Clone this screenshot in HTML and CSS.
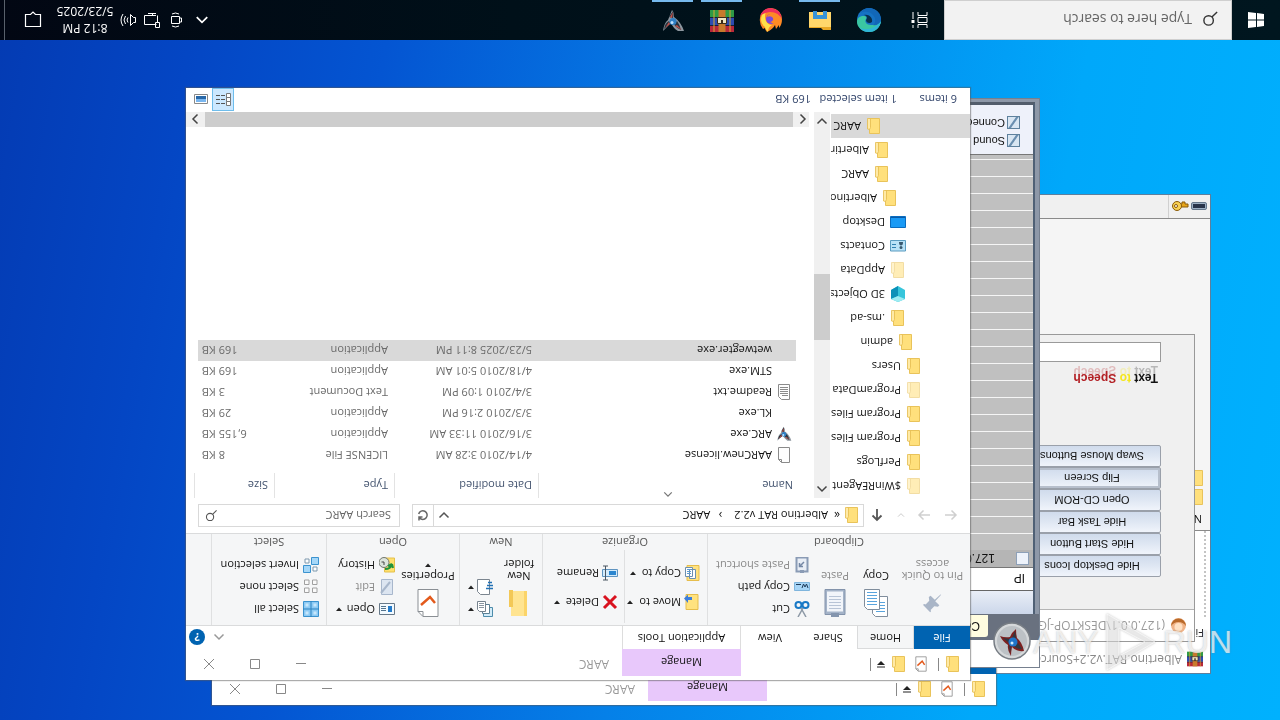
FILE: index.html
```html
<!DOCTYPE html>
<html lang="en">
<head>
    <meta charset="UTF-8">
    <meta name="viewport" content="width=device-width, initial-scale=1.0">
    <title>Desktop</title>
    <link rel="stylesheet" href="styles.css">
</head>
<body>
    <svg class="defs" aria-hidden="true">
        <symbol id="folder" viewBox="0 0 16 16"><path d="M2.5.5h10v15h-10z" fill="#ffe07c" stroke="#e9c35a"/><path d="M12.500 4.500l2 .5v10.500h-3v-9z" fill="#ffeaa6" stroke="#e4bb4c" stroke-width=".8"/></symbol>
        <symbol id="page" viewBox="0 0 16 16"><path d="M2.500.5h8l3 3v12h-11z" fill="#fdfdfd" stroke="#8a8a8a"/><path d="M10.500.5v3h3" fill="none" stroke="#8a8a8a"/></symbol>
        <symbol id="textpage" viewBox="0 0 16 16"><path d="M2.500.5h8l3 3v12h-11z" fill="#fdfdfd" stroke="#8a8a8a"/><path d="M4 4.500h6M4 6.500h8M4 8.500h8M4 10.500h8M4 12.500h8" stroke="#8a8a8a"/></symbol>
        <symbol id="checkpage" viewBox="0 0 16 20"><path d="M1.500 1h10l3 3v15h-13z" fill="#fff" stroke="#8b8b8b"/><path d="M11.500 1v3h3" fill="none" stroke="#8b8b8b"/><path d="M3.500 9l3 4.500 6-5.500" fill="none" stroke="#e3591c" stroke-width="1.800"/></symbol>
        <symbol id="arc" viewBox="0 0 24 24"><path d="M1 2h6q5 3 7 8l8-8q-1 8-5 11l-4 10q-2-2-2-7Q4 11 1 2z" fill="#8d979f"/><path d="M4 3q6 3 7 6l-3 3Q5 8 4 3zM21 4q-1 6-5 8l-2-3zM12 22q-1-4 0-7l4 1z" fill="#27313b"/><path d="M3 3l7 4-2 1zM20 5l-4 6-1-2zM12 21l1-6 2 1z" fill="#c6514a"/><circle cx="12" cy="11.500" r="3.500" fill="#2f7fc4"/><circle cx="13" cy="10.500" r="1.500" fill="#bfe3ff"/></symbol>
        <symbol id="rar" viewBox="0 0 24 22"><path d="M0 0h24v7H0z" fill="#b8283a"/><path d="M0 7h24v8H0z" fill="#2d4bb0"/><path d="M0 15h24v7H0z" fill="#2f9a45"/><path d="M0 6.500h24M0 14.500h24" stroke="#182038"/><path d="M4 0v22M20 0v22" stroke="#d9a830"/><path d="M8.500 0h7v22h-7z" fill="#c87a2c"/><path d="M7.500 8.500h9v6h-9z" fill="#eee4c0" stroke="#3b2b18"/><path d="M12 8v4" stroke="#3b2b18" stroke-width="2"/></symbol>
        <symbol id="arrow" viewBox="0 0 6 4"><path d="M0 0h6L3 3.500z" fill="#222"/></symbol>
        <symbol id="chev" viewBox="0 0 12 8"><path d="M1.500 1.500L6 6l4.500-4.500" fill="none" stroke="currentColor" stroke-width="1.500"/></symbol>
        <symbol id="search" viewBox="0 0 18 18"><circle cx="11" cy="7" r="5" fill="none" stroke="currentColor" stroke-width="1.500"/><path d="M7.500 10.500L2 16" stroke="currentColor" stroke-width="1.500"/></symbol>
    </svg>

    <div class="desktop">
        <main class="workspace">

            <!-- archive window -->
            <section class="window winrar">
                <header class="rar-title"><svg class="i16"><use href="#rar"/></svg><span>Albertino.RAT.v2.2+Source+Code</span></header>
                <nav class="rar-menu"><a href="#">File</a></nav>
                <div class="rar-tools"></div>
                <div class="rar-list">
                    <div class="rar-head">Name</div>
                    <svg class="i16"><use href="#folder"/></svg>
                    <svg class="i16"><use href="#folder"/></svg>
                </div>
                <footer class="rar-status">
                    <svg width="16" height="8" viewBox="0 0 16 8"><rect x=".5" y=".5" width="15" height="7" rx="1.500" fill="#9db0c4" stroke="#66788c"/><path d="M2 2h12v4H2z" fill="#28344a"/></svg>
                    <svg width="18" height="12" viewBox="0 0 18 12"><path d="M1 5h9v3H7v2H4V8H1z" fill="#e6a51b" stroke="#8a5a08"/><circle cx="12" cy="6" r="4.500" fill="#f8d052" stroke="#8a5a08"/><circle cx="13" cy="6" r="1.500" fill="#fff" stroke="#8a5a08"/></svg>
                    <i></i>
                </footer>
            </section>

            <!-- remote control window -->
            <section class="window remote">
                <header class="remote-title">
                    <svg width="17" height="17" viewBox="0 0 17 17"><circle cx="8.500" cy="8.500" r="7.500" fill="#f0b489"/><path d="M1 8a7.500 7.500 0 0 0 15 0q-3 4-7.500 4T1 8z" fill="#b96a2a"/><circle cx="8.500" cy="7" r="4" fill="#ffe1c4"/></svg>
                    <span>(127.0.0.1\DESKTOP-JGLLJLD)</span>
                </header>
                <div class="remote-body">
                    <div class="remote-buttons">
                        <button>Hide Desktop Icons</button>
                        <button>Hide Start Button</button>
                        <button>Hide Task Bar</button>
                        <button>Open CD-ROM</button>
                        <button class="focused">Flip Screen</button>
                        <button>Swap Mouse Buttons</button>
                    </div>
                    <label class="speech" for="speech">
                        <span class="speech-text">Text <em>to</em> <strong>Speech</strong></span>
                        <span class="speech-text mirror" aria-hidden="true">Text <em>to</em> <strong>Speech</strong></span>
                    </label>
                    <input id="speech" type="text">
                </div>
            </section>

            <!-- second explorer window, mostly hidden -->
            <section class="window explorer back">
                <header class="titlebar">
                    <div class="quick">
                        <svg class="i16"><use href="#folder"/></svg><i></i>
                        <svg class="i16"><use href="#checkpage"/></svg>
                        <svg class="i16"><use href="#folder"/></svg>
                        <svg class="drop" viewBox="0 0 8 8"><path d="M0 1h8" stroke="#222"/><path d="M0 3h8L4 7z" fill="#222"/></svg><i></i>
                    </div>
                    <span class="manage">Manage</span>
                    <span class="caption">AARC</span>
                    <div class="controls">
                        <button aria-label="Minimize"><svg viewBox="0 0 12 12"><path d="M1 6.500h10"/></svg></button>
                        <button aria-label="Maximize"><svg viewBox="0 0 12 12"><path d="M1.500 1.500h9v9h-9z"/></svg></button>
                        <button aria-label="Close"><svg viewBox="0 0 12 12"><path d="M1 1l10 10M11 1L1 11"/></svg></button>
                    </div>
                </header>
                <nav class="tabs"><button class="file" aria-label="File"></button></nav>
                <div class="ribbon"></div>
            </section>

            <!-- client list window -->
            <section class="window client">
                <header class="client-title"></header>
                <svg class="client-logo" viewBox="0 0 38 38"><circle cx="19" cy="19" r="18" fill="#d5d8da" stroke="#777d84" stroke-width="1.500"/><circle cx="19" cy="19" r="15" fill="#bcc1c5"/><path d="M7 9q8-1 12 4 1-5 1-9 4 6 3 11 5 3 8 9-5-2-10-1-2 5-6 8 0-6-1-9-5-4-7-13z" fill="#7b2020"/><path d="M9 11q6 0 8 3l-4 3zM21 7l1 8-2-2zM28 22l-6-5-1 4zM16 29l3-7-4-1z" fill="#303840"/><circle cx="18" cy="18" r="4.500" fill="#1f74c8"/><circle cx="19" cy="17" r="1.500" fill="#d0ecff"/></svg>
                <div class="client-tabs"><span>Connections</span></div>
                <div class="client-body">
                    <div class="client-bar"></div>
                    <div class="client-head">IP</div>
                    <div class="client-rows">
                        <label><input type="checkbox">127.0.0.1</label>
                    </div>
                    <div class="client-options">
                        <label><input type="checkbox" checked>Sound</label>
                        <label><input type="checkbox" checked>Connection</label>
                    </div>
                </div>
            </section>

            <!-- front explorer window -->
            <section class="window explorer front">
                <header class="titlebar">
                    <div class="quick">
                        <svg class="i16"><use href="#folder"/></svg><i></i>
                        <svg class="i16"><use href="#checkpage"/></svg>
                        <svg class="i16"><use href="#folder"/></svg>
                        <svg class="drop" viewBox="0 0 8 8"><path d="M0 1h8" stroke="#222"/><path d="M0 3h8L4 7z" fill="#222"/></svg><i></i>
                    </div>
                    <span class="manage">Manage</span>
                    <span class="caption">AARC</span>
                    <div class="controls">
                        <button aria-label="Minimize"><svg viewBox="0 0 12 12"><path d="M1 6.500h10"/></svg></button>
                        <button aria-label="Maximize"><svg viewBox="0 0 12 12"><path d="M1.500 1.500h9v9h-9z"/></svg></button>
                        <button aria-label="Close"><svg viewBox="0 0 12 12"><path d="M1 1l10 10M11 1L1 11"/></svg></button>
                    </div>
                </header>
                <nav class="tabs">
                    <button class="file">File</button>
                    <button class="active">Home</button>
                    <button>Share</button>
                    <button>View</button>
                    <button class="tools">Application Tools</button>
                    <div class="tabs-end">
                        <svg class="chev up"><use href="#chev"/></svg>
                        <button class="help" aria-label="Help">?</button>
                    </div>
                </nav>

                <div class="ribbon">
                    <div class="group clipboard">
                        <div class="tools-row">
                            <button class="big pin off"><svg viewBox="0 0 24 24"><path d="M14 2l8 8-2 1-1-.5-4 4 .5 4-2 1.500-4.500-4.500L3 21l-1 .5.5-1L8.500 14 4 9.500 5.500 8l4 .5 4-4L13 3z" fill="#a9b5c7"/></svg>Pin to Quick<br>access</button>
                            <button class="big copy"><svg viewBox="0 0 26 28"><path d="M1.500.5h12l3 3v17h-15z" fill="#fff" stroke="#7f8d9c"/><path d="M4 5.500h9M4 8.500h9M4 11.500h9M4 14.500h9" stroke="#59a4dd"/><path d="M9.500 7.500h12l3 3v17h-15z" fill="#fff" stroke="#7f8d9c"/><path d="M12 12.500h10M12 15.500h10M12 18.500h10M12 21.500h10M12 24.500h10" stroke="#59a4dd"/></svg>Copy</button>
                            <button class="big paste off"><svg viewBox="0 0 24 28"><path d="M2 2.500h20v25H2z" fill="#a4b3c8" stroke="#8393ab"/><path d="M4 5.500h16v20H4z" fill="#f2f5fa"/><path d="M8 0h8v4H8z" fill="#8495ae"/><path d="M6 8.500h12M6 11.500h12M6 14.500h12M6 17.500h12M6 20.500h12" stroke="#b8c4d6"/></svg>Paste</button>
                            <div class="stack">
                                <button class="small"><svg viewBox="0 0 16 16"><path d="M4 0l5 9M12 0L7 9" stroke="#8d99a6" stroke-width="1.500"/><circle cx="4.500" cy="12" r="3" fill="none" stroke="#1979c6" stroke-width="2"/><circle cx="11.500" cy="12" r="3" fill="none" stroke="#1979c6" stroke-width="2"/></svg>Cut</button>
                                <button class="small"><svg viewBox="0 0 16 16"><path d="M.5 4.500h15v8H.5z" fill="#a6d5f7" stroke="#7fb5dd"/><path d="M2 7l1.500 4L5 8l1.500 3L8 7M9 10.500h5" fill="none" stroke="#1d3a57"/></svg>Copy path</button>
                                <button class="small off"><svg viewBox="0 0 16 16"><path d="M2.500 1.500h11v14h-11z" fill="#e9eef6" stroke="#8a9bb5" stroke-width="2"/><path d="M6 0h4v3H6z" fill="#8a9bb5"/><path d="M6 11l4-4M7 6.500h3.500V10" fill="none" stroke="#7588a5" stroke-width="1.500"/></svg>Paste shortcut</button>
                            </div>
                        </div>
                        <div class="group-name">Clipboard</div>
                    </div>
                    <div class="group organize">
                        <div class="tools-row">
                            <div class="stack two">
                                <button class="small"><svg viewBox="0 0 16 16"><path d="M2 .5h12v15H2z" fill="#ffe27f" stroke="#e6bd4c"/><path d="M8 10h4V7l4 4.500-4 4V13H8z" fill="#3d7edb"/></svg>Move to<svg class="arrow"><use href="#arrow"/></svg></button>
                                <button class="small"><svg viewBox="0 0 16 16"><path d="M1 .5h12v15H1z" fill="#ffe27f" stroke="#e6bd4c"/><path d="M4.500 2.500h6v9h-6zM7.500 4.500h7v9h-7z" fill="#fff" stroke="#6d8fae"/><path d="M9 7.500h4M9 9.500h4M9 11.500h4" stroke="#5a9ad2"/></svg>Copy to<svg class="arrow"><use href="#arrow"/></svg></button>
                            </div>
                            <div class="stack two ruled">
                                <button class="small"><svg viewBox="0 0 16 16"><path d="M2 2l12 12M14 2L2 14" stroke="#d9121f" stroke-width="3"/></svg>Delete<svg class="arrow"><use href="#arrow"/></svg></button>
                                <button class="small"><svg viewBox="0 0 16 16"><path d="M.5 4.500h15v7H.5z" fill="#d4ebfb" stroke="#5f94c0"/><path d="M2 6h7v4H2z" fill="#2b86d0"/><path d="M12.500 1v14M10 1h5M10 15h5" stroke="#4a5663"/></svg>Rename</button>
                            </div>
                        </div>
                        <div class="group-name">Organize</div>
                    </div>
                    <div class="group new">
                        <div class="tools-row">
                            <button class="big newfolder"><svg viewBox="0 0 24 28"><path d="M4 1h16v25H4z" fill="#fbd469"/><path d="M7 1h13v25H7z" fill="#ffe491"/><path d="M18 10h4v17h-4z" fill="#f3c857"/></svg>New<br>folder</button>
                            <div class="stack icons">
                                <button class="small" aria-label="New item"><svg viewBox="0 0 16 16"><path d="M.5.5h9v9h-9z" fill="#d2ebf8" stroke="#4d8cab"/><path d="M3.500 3.500h7v9h-7z" fill="#fff" stroke="#5b7f93"/><path d="M7.500 5.500h6l2 2v8h-8z" fill="#fff" stroke="#76838e"/><path d="M9 9.500h5M9 11.500h5M9 13.500h5" stroke="#8a95a0"/></svg><svg class="arrow"><use href="#arrow"/></svg></button>
                                <button class="small" aria-label="Easy access"><svg viewBox="0 0 16 16"><path d="M3.500.5h9l3 3v12h-12z" fill="#fff" stroke="#7b858f"/><path d="M0 6.500h7M0 9.500h6M1 12.500h4" stroke="#2271b5" stroke-width="1.500"/></svg><svg class="arrow"><use href="#arrow"/></svg></button>
                            </div>
                        </div>
                        <div class="group-name">New</div>
                    </div>
                    <div class="group open">
                        <div class="tools-row">
                            <button class="big props"><svg viewBox="0 0 22 28"><path d="M1 .5h15l5 5v22H1z" fill="#fff" stroke="#8a8f94"/><path d="M16 .5v5h5" fill="none" stroke="#8a8f94"/><path d="M4 14l5 6 9-8" fill="none" stroke="#e35a1c" stroke-width="2.500"/></svg>Properties<svg class="arrow"><use href="#arrow"/></svg></button>
                            <div class="stack">
                                <button class="small"><svg viewBox="0 0 16 16"><path d="M.5 2.500h15v11H.5z" fill="#f3faff" stroke="#677989"/><path d="M3 5h4v6H3z" fill="#237bca"/><path d="M9 6.500h5M9 8.500h5M9 10.500h5" stroke="#53748e"/></svg>Open<svg class="arrow"><use href="#arrow"/></svg></button>
                                <button class="small off"><svg viewBox="0 0 16 16"><path d="M2.500.5h11v15h-11z" fill="#dce5f1" stroke="#a8b7cc"/><path d="M5 13L14 2" stroke="#a8b7cc" stroke-width="2"/></svg>Edit</button>
                                <button class="small"><svg viewBox="0 0 16 16"><path d="M.5 1h10v14H.5z" fill="#ffe06d" stroke="#e4c04b"/><circle cx="11" cy="10.500" r="5" fill="#dde4dc" stroke="#70766f"/><path d="M3 9q1-5 7-5M3 9l-1-4M3 9l4-2" fill="none" stroke="#22933b" stroke-width="2"/><path d="M11 8v3h2.500" fill="none" stroke="#444"/></svg>History</button>
                            </div>
                        </div>
                        <div class="group-name">Open</div>
                    </div>
                    <div class="group select">
                        <div class="tools-row">
                            <div class="stack">
                                <button class="small"><svg viewBox="0 0 16 16"><path d="M.5.5h15v15H.5z" fill="#8ccaf4" stroke="#3b93cf"/><path d="M8 0v16M0 8h16" stroke="#2d83c0"/><path d="M2.500 2.500h3v3h-3zM10.500 2.500h3v3h-3zM2.500 10.500h3v3h-3zM10.500 10.500h3v3h-3z" fill="#c7e7fc"/></svg>Select all</button>
                                <button class="small"><svg viewBox="0 0 16 16"><path d="M2 2.500h4.500V7H2zM10 2.500h4.500V7H10zM2 10.500h4.500V15H2zM10 10.500h4.500V15H10z" fill="#fafafa" stroke="#a0a0a0"/></svg>Select none</button>
                                <button class="small"><svg viewBox="0 0 16 16"><path d="M2 2h4v4H2zM10 10h4v4h-4z" fill="#fff" stroke="#7c98ad"/><path d="M8.500.5h7v7h-7zM.5 8.500h7v7h-7z" fill="#a5d7f8" stroke="#3b93cf"/></svg>Invert selection</button>
                            </div>
                        </div>
                        <div class="group-name">Select</div>
                    </div>
                </div>

                <div class="address-row">
                    <div class="history">
                        <svg viewBox="0 0 14 12"><path d="M13 6H2M6.500 1.500L2 6l4.500 4.500" fill="none" stroke="#cfcfcf" stroke-width="1.500"/></svg>
                        <svg viewBox="0 0 14 12"><path d="M1 6h11M7.500 1.500L12 6l-4.500 4.500" fill="none" stroke="#cfcfcf" stroke-width="1.500"/></svg>
                        <svg class="recent"><use href="#chev"/></svg>
                        <svg viewBox="0 0 14 14"><path d="M7 13V2M2.500 6.500L7 2l4.500 4.500" fill="none" stroke="#555" stroke-width="1.800"/></svg>
                    </div>
                    <div class="address">
                        <svg class="i16"><use href="#folder"/></svg>
                        <span>«</span><a href="#">Albertino RAT v2.2</a><span>›</span><a href="#">AARC</a>
                        <svg class="chev"><use href="#chev"/></svg>
                        <button aria-label="Refresh"><svg viewBox="0 0 12 12"><path d="M9.500 3.200A4.300 4.300 0 1 0 10.300 7M10 .5v3.500H6.500" fill="none" stroke="#666" stroke-width="1.500"/></svg></button>
                    </div>
                    <div class="find">
                        <input type="text" placeholder="Search AARC" aria-label="Search AARC">
                        <svg viewBox="0 0 18 18"><use href="#search"/></svg>
                    </div>
                </div>

                <div class="content">
                    <ul class="tree">
                        <li class="faded"><svg class="i16"><use href="#folder"/></svg>$WinREAgent</li>
                        <li><svg class="i16"><use href="#folder"/></svg>PerfLogs</li>
                        <li><svg class="i16"><use href="#folder"/></svg>Program Files</li>
                        <li><svg class="i16"><use href="#folder"/></svg>Program Files (x86)</li>
                        <li class="faded"><svg class="i16"><use href="#folder"/></svg>ProgramData</li>
                        <li><svg class="i16"><use href="#folder"/></svg>Users</li>
                        <li class="d1"><svg class="i16"><use href="#folder"/></svg>admin</li>
                        <li class="d2"><svg class="i16"><use href="#folder"/></svg>.ms-ad</li>
                        <li class="d2"><svg class="i16" viewBox="0 0 16 16"><path d="M8 0l7 3v9l-7 4-7-4V3z" fill="#36c5db"/><path d="M8 6l7-3v9l-7 4z" fill="#0b91b8"/><path d="M8 0l7 3-7 3-7-3z" fill="#9cecf2"/></svg>3D Objects</li>
                        <li class="d2 faded"><svg class="i16"><use href="#folder"/></svg>AppData</li>
                        <li class="d2"><svg class="i16" viewBox="0 0 16 16"><path d="M.5 3h15v10.500H.5z" fill="#b9e2f7" stroke="#5b9cc0"/><circle cx="5" cy="6.500" r="1.500" fill="#3a5a70"/><path d="M3 12q0-3.500 2-3.500T7 12z" fill="#3a5a70"/><path d="M10 6.500h4M10 9.500h4" stroke="#2f7fb0"/></svg>Contacts</li>
                        <li class="d2"><svg class="i16" viewBox="0 0 16 16"><path d="M.5 2.500h15v11H.5z" fill="#1a9af5" stroke="#0a6cbf"/><path d="M1 12.500h14" stroke="#0a5aa8"/></svg>Desktop</li>
                        <li class="d3"><svg class="i16"><use href="#folder"/></svg>Albertino RAT v2.2</li>
                        <li class="d4"><svg class="i16"><use href="#folder"/></svg>AARC</li>
                        <li class="d4"><svg class="i16"><use href="#folder"/></svg>Albertino RAT v2.2</li>
                        <li class="d5 selected"><svg class="i16"><use href="#folder"/></svg>AARC</li>
                    </ul>
                    <div class="vscroll">
                        <svg class="chev up"><use href="#chev"/></svg>
                        <div class="vthumb"></div>
                        <svg class="chev"><use href="#chev"/></svg>
                    </div>
                    <div class="files">
                        <svg class="sort"><use href="#chev"/></svg>
                        <table>
                            <thead>
                                <tr><th class="c-name"><span>Name</span></th><th class="c-date"><span>Date modified</span></th><th class="c-type"><span>Type</span></th><th class="c-size"><span>Size</span></th></tr>
                            </thead>
                            <tbody>
                                <tr><td><svg class="i16"><use href="#page"/></svg>AARCnew.license</td><td>4/14/2010 3:28 AM</td><td>LICENSE File</td><td>8 KB</td></tr>
                                <tr><td><svg class="i16"><use href="#arc"/></svg>ARC.exe</td><td>3/16/2010 11:33 AM</td><td>Application</td><td>6,155 KB</td></tr>
                                <tr><td><svg class="i16"></svg>KL.exe</td><td>3/3/2010 2:16 PM</td><td>Application</td><td>29 KB</td></tr>
                                <tr><td><svg class="i16"><use href="#textpage"/></svg>Readme.txt</td><td>3/4/2010 1:09 PM</td><td>Text Document</td><td>3 KB</td></tr>
                                <tr><td><svg class="i16"></svg>STM.exe</td><td>4/18/2010 5:01 AM</td><td>Application</td><td>169 KB</td></tr>
                                <tr class="selected"><td><svg class="i16"></svg>wetwegter.exe</td><td>5/23/2025 8:11 PM</td><td>Application</td><td>169 KB</td></tr>
                            </tbody>
                        </table>
                        <div class="hscroll">
                            <svg class="chev left"><use href="#chev"/></svg>
                            <div class="hthumb"></div>
                            <svg class="chev right"><use href="#chev"/></svg>
                        </div>
                    </div>
                </div>

                <footer class="statusbar">
                    <span class="count">6 items</span>
                    <span class="picked">1 item selected</span>
                    <span>169 KB</span>
                    <div class="views">
                        <button class="on" aria-label="Details"><svg viewBox="0 0 16 14"><path d="M.5.5h4v4h-4zM.5 4.500h4v4h-4zM.5 8.500h4v4h-4z" fill="#fff" stroke="#777"/><path d="M6 2.500h4M11 2.500h4M6 6.500h4M11 6.500h4M6 10.500h4M11 10.500h4" stroke="#555"/></svg></button>
                        <button aria-label="Large icons"><svg viewBox="0 0 16 14"><path d="M1.500 2.500h13v9h-13z" fill="#fff" stroke="#888"/><path d="M3 4h10v3H3z" fill="#79b6ef"/><path d="M3 7h10v3H3z" fill="#2868a8"/></svg></button>
                    </div>
                </footer>
            </section>
        </main>

        <footer class="taskbar">
            <button class="start" aria-label="Start"><svg viewBox="0 0 16 16"><path d="M0 2l7-1v6.500H0zM8 1l8-1v7.500H8zM0 8.500h7V15l-7-1zM8 8.500h8V16l-8-1z" fill="#fff"/></svg></button>
            <div class="task-search">
                <svg viewBox="0 0 18 18"><use href="#search"/></svg>
                <input type="text" placeholder="Type here to search" aria-label="Type here to search">
            </div>
            <div class="apps">
                <button aria-label="Task View"><svg class="view" viewBox="0 0 16 16"><path d="M.5 0v3.500h9V0M.5 16v-3.500h9V16M.5 5.500h9v5h-9z" fill="none" stroke="#fff"/><path d="M14.500 0v3M14.500 9v7" stroke="#fff"/><path d="M13 5h3v3h-3z" fill="#fff"/></svg></button>
                <button aria-label="Edge"><svg viewBox="0 0 24 24"><circle cx="12" cy="12" r="12" fill="#1572c4"/><path d="M0 11C1 3 7 0 12 0c7 0 12 5 12 10 0 4-3 6-6 6-4 0-4-2-3-3 2-3-1-6-5-6-5 0-9 2-10 4z" fill="#3ac6a2"/><path d="M0 11C1 4 7 0 12 0c4 0 8 2 10 5-5-4-15-3-22 6z" fill="#2fb6d8"/><path d="M0 12c1-4 5-6 8-5-3 2-3 7 0 10 3 4 9 4 13 2-3 4-8 6-12 4.500C3 22 0 17 0 12z" fill="#1267b8"/><path d="M9 10c2-2 6-1 6 2-1 1-2 4 2 5-5 1-9-3-8-7z" fill="#072f4c"/></svg></button>
                <button class="running" aria-label="File Explorer"><svg viewBox="0 0 24 24"><path d="M1 3h8l2 2h12v16H1z" fill="#e9a825"/><path d="M1 6h22v15H1z" fill="#ffd76b"/><path d="M5 14h14v8h-4v-4H9v4H5z" fill="#3694d8"/></svg></button>
                <button aria-label="Firefox"><svg viewBox="0 0 24 24"><path d="M16 0q2 2 2 4 2-1 2-1 4 5 3 11-1 9-11 10Q2 23 1 13 1 7 4 4v3l3-4 1 4q2-4 8-7z" fill="#ff8a25"/><path d="M15 0q3 3 3 5 4 3 4 7 0 6-5 9 2-6 0-10-2-4-6-4 4-2 4-7z" fill="#ffe14a"/><path d="M1 12q1 11 11 12 8 0 11-8-5 4-10 4Q4 20 1 12z" fill="#ef315d"/><circle cx="12" cy="13" r="5" fill="#7b48dc"/><path d="M6 9q4-1 7 1-4 1-3 4 2 3 6 1-2 4-6 3-5-2-4-9z" fill="#ff8b24"/></svg></button>
                <button class="running" aria-label="WinRAR"><svg viewBox="0 0 24 22"><use href="#rar"/></svg></button>
                <button class="running" aria-label="ARC"><svg viewBox="0 0 24 24"><use href="#arc"/></svg></button>
            </div>
            <div class="tray">
                <svg class="chev up"><use href="#chev"/></svg>
                <svg viewBox="0 0 16 16"><path d="M4.500 4.500h8v7h-8zM2.500 6v4h2V6zM5 2q3.500-2 7 0M5 14q3.500 2 7 0" fill="none" stroke="#fff"/></svg>
                <svg viewBox="0 0 16 16"><path d="M3.500 3.500h12v9H4M7.500 12.500v2M4 14.500h8M.5.5h4v5h-4zM2.500 5.500v7" fill="none" stroke="#fff"/></svg>
                <svg viewBox="0 0 16 16"><path d="M.5 5.500h2l3-3v11l-3-3h-2zM8 5.500q2 2.500 0 5M10.500 4q3 4 0 8M13 2q4 6 0 12" fill="none" stroke="#fff"/></svg>
                <time class="clock"><span>8:12 PM</span><span>5/23/2025</span></time>
                <svg class="note" viewBox="0 0 18 18"><path d="M1.500 2.500h15v12h-5l-2.500 2.500-2.500-2.500h-5z" fill="none" stroke="#fff" stroke-width="1.200"/></svg>
            </div>
        </footer>
    </div>

    <div class="watermark"><span>ANY</span><svg viewBox="0 0 56 60"><path d="M4 2l48 28L4 58zM16 16v28l26-14z" fill="#fff" fill-opacity=".4" fill-rule="evenodd" stroke="#fff" stroke-opacity=".6"/></svg><span>RUN</span></div>
</body>
</html>
```
FILE: styles.css
```css
* {
    box-sizing: border-box;
}
body {
    margin: 0;
    overflow: hidden;
    font-family: "Open Sans", "Noto Sans", sans-serif;
    font-size: 11px;
    line-height: 16px;
    color: #111;
}
button, input {
    font: inherit;
    color: inherit;
    padding: 0;
    margin: 0;
    border: none;
    background: none;
}
a {
    color: inherit;
    text-decoration: none;
}
svg {
    display: block;
    flex: none;
}
.defs {
    position: absolute;
    width: 0;
    height: 0;
}
.i16 {
    width: 16px;
    height: 16px;
}
.chev {
    width: 12px;
    height: 8px;
}
.chev.up {
    transform: rotate(180deg);
}
.chev.left {
    transform: rotate(90deg);
}
.chev.right {
    transform: rotate(-90deg);
}

/* the display is flipped upside down */
.desktop {
    display: flex;
    flex-direction: column;
    height: 100vh;
    transform: rotate(180deg);
    background: linear-gradient(100deg, #00b1fe 0%, #00a8fa 22%, #0580e8 48%, #0455d2 72%, #0446c4 86%, #043bb3 100%);
}
.workspace {
    position: relative;
    flex: 1;
}
.window {
    position: absolute;
    display: flex;
    flex-direction: column;
    overflow: hidden;
    background: #fff;
}

/* archive window */
.winrar {
    left: 69px;
    top: 46px;
    width: 600px;
    height: 480px;
    border: 1px solid #5d7f9d;
    color: #888;
}
.rar-title {
    display: flex;
    align-items: center;
    gap: 5px;
    height: 28px;
    padding-left: 7px;
    font-size: 12px;
}
.rar-menu {
    height: 28px;
    padding: 4px 6px;
    color: #222;
}
.rar-tools {
    height: 86px;
    margin-left: 4px;
    border-left: 2px dotted #c4c4c4;
}
.rar-list {
    flex: 1;
    padding-left: 5px;
    background: #f5f5f5;
    border-top: 1px solid #8a8a8a;
    color: #111;
}
.rar-list svg {
    margin-top: 3px;
}
.rar-head {
    height: 22px;
    padding: 3px;
}
.rar-status {
    display: flex;
    align-items: center;
    gap: 2px;
    height: 24px;
    padding-left: 3px;
    background: #f0f0f0;
    border-top: 1px solid #8a8a8a;
}
.rar-status i {
    height: 100%;
    border-left: 1px solid #d0d0d0;
}

/* remote control window */
.remote {
    left: 85px;
    top: 78px;
    width: 400px;
    height: 308px;
    border: 1px solid #999;
    font-family: "Liberation Sans", Arial, sans-serif;
}
.remote-title {
    display: flex;
    align-items: center;
    gap: 5px;
    height: 31px;
    padding-left: 7px;
    font-family: "Open Sans", "Noto Sans", sans-serif;
    font-size: 12px;
    color: #999;
}
.remote-body {
    flex: 1;
    padding: 32px 33px 0;
    background: #f0f0f0;
    border-top: 1px solid #b5b5b5;
}
.remote-buttons {
    display: flex;
    flex-direction: column;
    width: 138px;
}
.remote-buttons button {
    height: 22px;
    border: 1px solid #9aa0aa;
    border-radius: 2px;
    background: linear-gradient(#f0f4fb, #dfe7f3 50%, #d0dbec);
}
.remote-buttons .focused {
    box-shadow: inset 0 0 0 2px #b7bfcc;
}
.speech {
    display: block;
    height: 23px;
    margin: 60px 0 0 3px;
}
.speech-text {
    display: block;
    height: 13px;
    font-size: 12px;
    line-height: 14px;
    font-weight: bold;
    white-space: pre;
}
.speech-text em {
    font-style: normal;
    color: #f5e71c;
}
.speech-text strong {
    color: #b32025;
}
.mirror {
    height: 11px;
    margin-top: -3px;
    transform: scaleY(-1);
    opacity: .25;
}
.remote-body input {
    display: block;
    width: 300px;
    height: 20px;
    background: #fff;
    border: 1px solid #9a9a9a;
}

/* client list window */
.client {
    left: 240px;
    top: 52px;
    width: 700px;
    height: 570px;
    border: 1px solid #76808f;
    background: #8e98a8;
    font-family: "Liberation Sans", Arial, sans-serif;
}
.client-title {
    height: 27px;
    background: #fff;
}
.client-logo {
    position: absolute;
    left: 8px;
    top: 7px;
    width: 38px;
    height: 38px;
}
.client-tabs {
    height: 26px;
    padding: 3px 0 0 51px;
    background: #69717f;
}
.client-tabs span {
    display: block;
    width: 90px;
    height: 22px;
    padding: 3px 8px;
    background: #fffde0;
    border-radius: 3px 3px 0 0;
    font-size: 12px;
}
.client-body {
    flex: 1;
    display: flex;
    flex-direction: column;
    margin: 0 5px 3px 4px;
    border-left: 2px solid #4f6075;
    border-bottom: 3px solid #535d6c;
    background: #c0c0c0;
}
.client-bar {
    height: 23px;
    background: linear-gradient(#ccd7ea, #e9eef7);
}
.client-head {
    height: 24px;
    padding: 4px 8px;
    background: #fff;
    border-top: 1px solid #666;
    border-bottom: 1px solid #777;
    font-size: 12px;
}
.client-rows {
    flex: 1;
    background: repeating-linear-gradient(#c0c0c0 0 16px, #f5f5f5 16px 17px);
}
.client-rows label {
    display: flex;
    align-items: center;
    gap: 21px;
    height: 17px;
    padding-left: 4px;
    background: #b5b5b5;
    font-size: 12px;
}
.client input {
    appearance: none;
    width: 13px;
    height: 13px;
    background: #edf2fa;
    border: 1px solid #8da0b8;
}
.client-options {
    height: 50px;
    padding-top: 4px;
    background: #eef1fa;
    border-top: 1px solid #777;
}
.client-options label {
    display: flex;
    align-items: center;
    gap: 2px;
    height: 18px;
    padding-left: 13px;
}
.client-options input {
    background: linear-gradient(125deg, #d9e6f2 40%, #6b8fb0 46% 54%, #d9e6f2 60%);
    border-color: #5e819d;
}

/* explorer windows */
.explorer {
    width: 784px;
    height: 592px;
    box-shadow: 0 0 1px 1px rgba(90, 90, 90, .5);
}
.back {
    left: 284px;
    top: 15px;
}
.front {
    left: 310px;
    top: 40px;
}
.titlebar {
    display: flex;
    height: 31px;
}
.quick {
    display: flex;
    align-items: center;
    gap: 6px;
    width: 229px;
    padding-left: 9px;
}
.quick i {
    width: 1px;
    height: 13px;
    margin-right: 3px;
    background: #888;
}
.quick .drop {
    width: 8px;
    height: 8px;
}
.manage {
    width: 119px;
    margin-top: 4px;
    padding-top: 6px;
    background: #e8c8fb;
    text-align: center;
}
.caption {
    flex: 1;
    padding: 8px 13px;
    color: #999;
    font-size: 12px;
}
.controls {
    display: flex;
}
.controls button {
    width: 46px;
    padding-left: 17px;
}
.controls svg {
    width: 12px;
    height: 12px;
    fill: none;
    stroke: #888;
}
.tabs {
    display: flex;
    height: 23px;
}
.tabs button {
    width: 58px;
    padding-bottom: 2px;
}
.tabs .file {
    width: 56px;
    background: #0063b1;
    color: #fff;
}
.tabs .active {
    width: 57px;
    background: #f5f6f7;
    border: 1px solid #dadbdc;
    border-bottom: none;
}
.tabs .tools {
    width: 119px;
    border-right: 1px solid #ddd;
    border-left: 1px solid #ddd;
}
.tabs-end {
    display: flex;
    align-items: center;
    gap: 8px;
    margin-left: auto;
    padding-right: 3px;
    color: #999;
}
.tabs .help {
    width: 16px;
    height: 16px;
    padding: 0;
    border-radius: 50%;
    background: #0063b1;
    color: #fff;
    font-weight: bold;
    line-height: 14px;
}
.ribbon {
    display: flex;
    height: 93px;
    background: #f5f6f7;
    border-top: 1px solid #dadbdc;
    border-bottom: 1px solid #dadbdc;
}
.group {
    display: flex;
    flex-direction: column;
    padding-top: 2px;
    border-right: 1px solid #dfe0e1;
}
.clipboard { width: 263px; }
.organize { width: 165px; }
.new { width: 83px; }
.open { width: 133px; }
.select { width: 115px; }
.tools-row {
    display: flex;
    flex: 1;
}
.group-name {
    height: 16px;
    text-align: center;
    color: #555;
}
.big {
    display: flex;
    flex-direction: column;
    align-items: center;
    padding-top: 6px;
    line-height: 12px;
}
.big svg {
    width: 26px;
    height: 28px;
    margin-bottom: 7px;
}
.big .arrow, .small .arrow {
    width: 6px;
    height: 4px;
    margin: 3px 0 0;
}
.pin {
    width: 75px;
}
.pin svg {
    padding: 2px;
}
.copy {
    width: 38px;
}
.paste {
    width: 44px;
}
.newfolder {
    width: 46px;
}
.props {
    width: 62px;
}
.off {
    color: #8a8a8a;
}
.stack {
    display: flex;
    flex-direction: column;
    padding: 3px 0 0 3px;
}
.small {
    display: flex;
    align-items: center;
    gap: 4px;
    height: 22px;
    white-space: nowrap;
}
.small svg {
    width: 16px;
    height: 16px;
}
.small .arrow {
    margin: 0 0 0 1px;
}
.two {
    width: 86px;
    padding: 6px 0 0 7px;
}
.two .small {
    height: 29px;
    gap: 3px;
}
.two .arrow {
    margin-left: 3px;
}
.ruled {
    border-left: 1px solid #dfe0e1;
    padding-left: 6px;
}
.icons .small {
    gap: 2px;
}
.open .stack {
    padding-left: 2px;
}
.select .stack {
    padding-left: 7px;
}

.address-row {
    display: flex;
    height: 35px;
    padding: 6px 12px 6px 0;
}
.history {
    display: flex;
    align-items: center;
    justify-content: space-between;
    width: 106px;
    padding: 0 6px 0 12px;
}
.history svg {
    width: 14px;
    height: 14px;
}
.history .recent {
    width: 8px;
    height: 6px;
    color: #ccc;
}
.address {
    display: flex;
    align-items: center;
    width: 452px;
    height: 23px;
    padding-left: 3px;
    border: 1px solid #d9d9d9;
}
.address span {
    width: 12px;
    margin-left: 4px;
    font-size: 12px;
}
.address a + span {
    margin: 0 0 0 12px;
}
.address .chev {
    margin: 0 4px 0 auto;
    color: #555;
}
.address button {
    width: 21px;
    height: 100%;
    padding-left: 4px;
    border-left: 1px solid #d9d9d9;
}
.address button svg {
    width: 12px;
    height: 12px;
}
.find {
    display: flex;
    align-items: center;
    flex: 1;
    height: 23px;
    margin-left: 12px;
    padding: 0 6px 0 8px;
    border: 1px solid #d9d9d9;
}
.find input {
    flex: 1;
    min-width: 0;
}
.find svg {
    width: 13px;
    height: 13px;
    color: #555;
}
::placeholder {
    color: #666;
    opacity: 1;
}

.content {
    display: flex;
    flex: 1;
    min-height: 0;
}
.tree {
    width: 139px;
    margin: 0;
    padding: 0;
    overflow: hidden;
    list-style: none;
}
.tree li {
    display: flex;
    align-items: center;
    gap: 5px;
    height: 24px;
    padding-left: 48px;
    white-space: nowrap;
}
.tree .faded svg {
    opacity: .55;
}
.tree .d1 { padding-left: 56px; }
.tree .d2 { padding-left: 64px; }
.tree .d3 { padding-left: 72px; }
.tree .d4 { padding-left: 80px; }
.tree .d5 { padding-left: 88px; }
.selected {
    background: #d9d9d9;
}
.vscroll {
    display: flex;
    flex-direction: column;
    align-items: center;
    width: 17px;
    margin-bottom: 1px;
    padding: 5px 0;
    background: #f0f0f0;
    border-left: 1px solid #fff;
    color: #444;
}
.vscroll .chev:last-child {
    margin-top: auto;
}
.vthumb {
    width: 100%;
    height: 66px;
    margin-top: 145px;
    background: #cdcdcd;
}
.files {
    position: relative;
    display: flex;
    flex-direction: column;
    flex: 1;
    padding-left: 18px;
}
.sort {
    position: absolute;
    left: 141px;
    top: 0;
    width: 10px;
    height: 7px;
    color: #777;
    transform: rotate(180deg);
}
table {
    width: 598px;
    table-layout: fixed;
    border-collapse: collapse;
}
th, td {
    padding: 0;
    font-weight: normal;
    text-align: left;
    white-space: nowrap;
}
th {
    height: 32px;
    vertical-align: top;
    color: #44546f;
}
th span {
    display: block;
    height: 25px;
    padding: 5px 0 0 6px;
    border-right: 1px solid #e3e3e3;
}
.c-name { width: 258px; }
.c-date { width: 144px; }
.c-type { width: 120px; }
.c-name span { padding-left: 3px; }
.c-size span { margin-right: -4px; }
td {
    height: 21px;
    padding-left: 6px;
    color: #6a6a6a;
}
td:first-child {
    display: flex;
    align-items: center;
    gap: 4px;
    padding-left: 4px;
    color: #111;
}
td:last-child {
    padding-right: 4px;
    text-align: right;
}
.hscroll {
    display: flex;
    align-items: center;
    height: 15px;
    margin: auto 0 1px -13px;
    background: #f0f0f0;
    color: #444;
}
.hthumb {
    flex: 1;
    height: 15px;
    margin: 0 4px;
    background: #cdcdcd;
}
.hscroll .right {
    margin-right: 3px;
}
.statusbar {
    display: flex;
    align-items: center;
    height: 23px;
    padding-left: 13px;
    color: #33456b;
}
.count {
    width: 60px;
}
.picked {
    width: 86px;
}
.views {
    display: flex;
    height: 23px;
    margin-left: auto;
    padding-right: 4px;
}
.views button {
    width: 22px;
    padding-left: 3px;
}
.views .on {
    background: #cce8ff;
    border: 1px solid #6fbdeb;
    padding-left: 2px;
}
.views svg {
    width: 16px;
    height: 14px;
}

/* taskbar */
.taskbar {
    display: flex;
    align-items: center;
    height: 40px;
    background: linear-gradient(90deg, #00161f, #001019 60%, #020713);
    color: #fff;
}
.start {
    width: 48px;
    padding-left: 16px;
}
.start svg {
    width: 16px;
    height: 16px;
}
.task-search {
    display: flex;
    align-items: center;
    gap: 10px;
    width: 288px;
    height: 40px;
    padding: 2px 12px 0;
    background: #f2f2f2;
    border: 1px solid #cfcfcf;
    color: #333;
}
.task-search svg {
    width: 17px;
    height: 17px;
}
.task-search input {
    flex: 1;
    font-size: 14px;
}
.apps {
    display: flex;
    height: 100%;
    padding-left: 2px;
}
.apps button {
    width: 41px;
    height: 40px;
    margin: 0 4px;
    padding-left: 8px;
}
.apps svg {
    width: 24px;
    height: 24px;
}
.apps .view {
    width: 17px;
    height: 16px;
    margin-left: 2px;
}
.apps .running {
    border-bottom: 2px solid #76b9ed;
}
.tray {
    display: flex;
    align-items: center;
    gap: 8px;
    height: 100%;
    margin-left: auto;
    margin-right: 4px;
    border-right: 1px solid #59616b;
}
.tray svg {
    width: 16px;
    height: 16px;
}
.tray .chev {
    width: 14px;
    height: 10px;
    margin-right: 3px;
}
.clock {
    width: 62px;
    margin: 0 4px 0 -4px;
    font-size: 12px;
    text-align: center;
}
.clock span {
    display: block;
    line-height: 17px;
}
.tray .note {
    width: 18px;
    height: 18px;
    margin-right: 19px;
}

.watermark {
    position: absolute;
    right: 48px;
    bottom: 48px;
    display: flex;
    align-items: center;
    gap: 4px;
    height: 60px;
    font-family: "Liberation Sans", Arial, sans-serif;
    font-size: 32px;
    line-height: 60px;
    color: rgba(255, 255, 255, .7);
    text-shadow: 0 0 2px rgba(120, 120, 120, .5);
}
.watermark svg {
    width: 56px;
    height: 60px;
    filter: drop-shadow(0 0 1px rgba(100, 100, 100, .6));
}
```
